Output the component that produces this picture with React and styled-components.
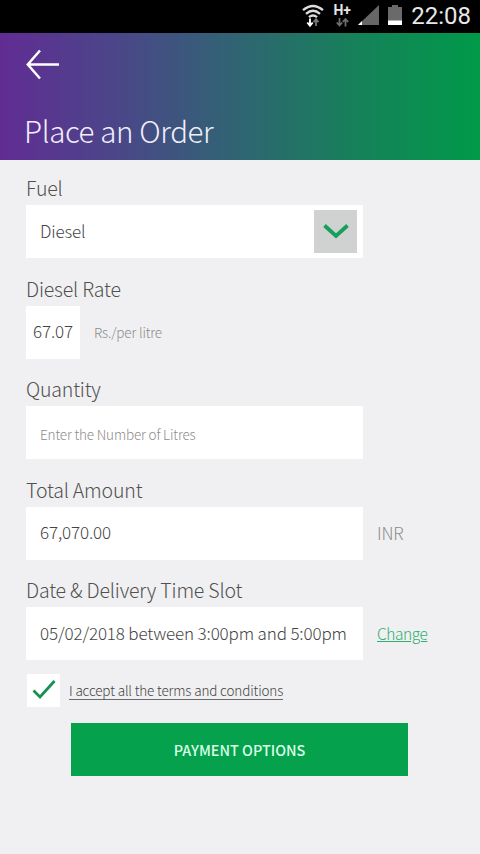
import styled, { createGlobalStyle } from "styled-components";

export default function App() {
  return (
    <>
      <GlobalStyle />
      <Screen>
        <StatusBar>
          <WifiIcon />
          <NetworkIcon />
          <SignalIcon />
          <BatteryIcon />
          <Clock>22:08</Clock>
        </StatusBar>

        <Header>
          <BackButton type="button" aria-label="Back">
            <svg width="34" height="32" viewBox="0 0 34 32" fill="none" stroke="#fff" strokeWidth="2.5">
              <path d="M14 1.5 1.8 15.5 14 29.5M2 15.5h31" />
            </svg>
          </BackButton>
          <Title>Place an Order</Title>
        </Header>

        <Form>
          <Field>
            <Label>Fuel</Label>
            <Row>
              <Box>
                <Value>Diesel</Value>
                <DropButton type="button" aria-label="Choose fuel">
                  <svg width="26" height="16" viewBox="0 0 26 16" fill="none" stroke="#15a05a" strokeWidth="3.8">
                    <path d="M1.5 1.5 13 12 24.5 1.5" />
                  </svg>
                </DropButton>
              </Box>
            </Row>
          </Field>

          <Field>
            <Label>Diesel Rate</Label>
            <Row>
              <Box $small>
                <Value>67.07</Value>
              </Box>
              <Unit $small>Rs./per litre</Unit>
            </Row>
          </Field>

          <Field>
            <Label>Quantity</Label>
            <Row>
              <Box>
                <Placeholder>Enter the Number of Litres</Placeholder>
              </Box>
            </Row>
          </Field>

          <Field>
            <Label>Total Amount</Label>
            <Row>
              <Box>
                <Value>67,070.00</Value>
              </Box>
              <Unit>INR</Unit>
            </Row>
          </Field>

          <Field>
            <Label>Date &amp; Delivery Time Slot</Label>
            <Row>
              <Box>
                <Value>05/02/2018 between 3:00pm and 5:00pm</Value>
              </Box>
              <ChangeLink>Change</ChangeLink>
            </Row>
          </Field>

          <Terms>
            <Check>
              <svg width="24" height="20" viewBox="0 0 24 20" fill="none" stroke="#149153" strokeWidth="2.8">
                <path d="M1.5 10.5 8 17 22.5 1" />
              </svg>
            </Check>
            <TermsText>I accept all the terms and conditions</TermsText>
          </Terms>

          <PayButton type="button">PAYMENT OPTIONS</PayButton>
        </Form>
      </Screen>
    </>
  );
}

function WifiIcon() {
  return (
    <svg width="22" height="24" viewBox="0 0 22 24" fill="none" stroke="#dcdcdc" strokeWidth="2.4">
      <path d="M1 6.2Q11-2.2 21 6.2" />
      <path d="M4 9.8Q11 3.8 18 9.8" />
      <path d="M7 13.2Q11 9.6 15 13.2" />
      <path d="M8 14.5v7M5.3 18.5 8 21.7l2.7-3.2" stroke="#fff" strokeWidth="1.9" />
      <path d="M14 22v-6.5M11.5 18.2l2.5-3 2.5 3" stroke="#777" strokeWidth="1.8" />
    </svg>
  );
}

function NetworkIcon() {
  return (
    <Network>
      <span>H+</span>
      <svg width="13" height="9" viewBox="0 0 13 9" fill="none" stroke="#6d6d6d" strokeWidth="1.8">
        <path d="M3.5 0v7M.8 4.5l2.7 3 2.7-3M9.5 8.5v-7M6.8 4l2.7-3 2.7 3" />
      </svg>
    </Network>
  );
}

function SignalIcon() {
  return (
    <svg width="23" height="21" viewBox="0 0 23 21">
      <path d="M22 0v20H1z" fill="#676767" />
      <path d="M5 16v4H1z" fill="#fff" />
    </svg>
  );
}

function BatteryIcon() {
  return (
    <Battery width="14" height="21" viewBox="0 0 14 21">
      <path d="M4 0h6v2h4v18H0V2h4z" fill="#6a6a6a" />
      <path d="M0 15.5h14V20H0z" fill="#fff" />
    </Battery>
  );
}

const GlobalStyle = createGlobalStyle`
  * {
    box-sizing: border-box;
  }

  body {
    margin: 0;
    background: #f0f0f2;
    font-family: "Noto Sans CJK SC", "Open Sans", sans-serif;
    font-weight: 300;
  }

  button {
    border: none;
    padding: 0;
    font-family: inherit;
  }

  svg {
    display: block;
    flex-shrink: 0;
  }
`;

const Screen = styled.div`
  width: 480px;
  height: 854px;
  overflow: hidden;
  background: #f0f0f2;
`;

const StatusBar = styled.div`
  display: flex;
  align-items: center;
  justify-content: flex-end;
  height: 33px;
  padding: 0 9px 2px 0;
  background: #000;
`;

const Network = styled.div`
  display: flex;
  flex-direction: column;
  align-items: center;
  width: 18px;
  margin: 0 6px 0 9px;
  color: #e4e4e4;
  font-family: Roboto, sans-serif;
  font-weight: 700;
  font-size: 14px;
  line-height: 13px;

  svg {
    margin-top: 1px;
  }
`;

const Battery = styled.svg`
  margin-left: 8px;
`;

const Clock = styled.span`
  margin-left: 9px;
  color: #e8e8e8;
  font-family: Roboto, sans-serif;
  font-weight: 400;
  font-size: 24px;
  line-height: 32px;
`;

const Header = styled.header`
  height: 127px;
  padding: 16px 24px 0;
  background: linear-gradient(90deg, #612c94 0%, #4a4788 25%, #2f6572 50%, #158259 75%, #009a49 100%);
`;

const BackButton = styled.button`
  display: block;
  margin-left: 2px;
  background: none;
`;

const Title = styled.h1`
  margin: 29px 0 0;
  color: #f1effa;
  font-weight: 300;
  font-size: 29.5px;
  letter-spacing: -0.38px;
  line-height: 40px;
`;

const Form = styled.main`
  padding: 10px 26px 0;
`;

const Field = styled.div`
  height: 100.6px;
`;

const Label = styled.div`
  height: 35px;
  color: #505050;
  font-size: 19.5px;
  letter-spacing: -0.18px;
  line-height: 35px;
`;

const Row = styled.div`
  display: flex;
  align-items: center;
`;

const Box = styled.div`
  display: flex;
  align-items: center;
  justify-content: ${(props) => (props.$small ? "center" : "space-between")};
  width: ${(props) => (props.$small ? "54px" : "337px")};
  height: 53px;
  padding: ${(props) => (props.$small ? "0" : "0 6px 0 14px")};
  background: #fff;
`;

const Value = styled.span`
  padding-bottom: 2px;
  color: #444;
  font-size: 17px;
  letter-spacing: -0.14px;
  line-height: 24px;
  white-space: nowrap;
`;

const Placeholder = styled.span`
  padding-top: 2px;
  color: #8c8c8c;
  font-size: 13.5px;
  letter-spacing: -0.16px;
  line-height: 20px;
`;

const Unit = styled.span`
  margin-left: 14px;
  padding-bottom: ${(props) => (props.$small ? "0" : "2px")};
  color: #8c8c8c;
  font-size: ${(props) => (props.$small ? "13.5px" : "17px")};
  letter-spacing: -0.16px;
`;

const DropButton = styled.button`
  display: flex;
  align-items: center;
  justify-content: center;
  width: 43px;
  height: 43px;
  background: #d0d2d2;
`;

const ChangeLink = styled.a`
  margin-left: 14px;
  padding-bottom: 2px;
  color: #2fae70;
  font-size: 15.5px;
  letter-spacing: -0.45px;
  text-decoration: underline;
`;

const Terms = styled.div`
  display: flex;
  align-items: center;
  height: 33px;
  margin-top: 1px;
`;

const Check = styled.div`
  display: flex;
  align-items: center;
  justify-content: center;
  width: 33px;
  height: 33px;
  margin-left: 1px;
  background: #fff;
`;

const TermsText = styled.span`
  margin: 2px 0 0 9px;
  border-bottom: 1px solid #6b6b6b;
  color: #444;
  font-size: 13.5px;
  letter-spacing: -0.14px;
  line-height: 17px;
`;

const PayButton = styled.button`
  display: block;
  width: 337px;
  height: 53px;
  margin: 16px 0 0 45px;
  background: #05a14c;
  color: #d9ffe6;
  font-weight: 500;
  font-size: 14.4px;
`;
